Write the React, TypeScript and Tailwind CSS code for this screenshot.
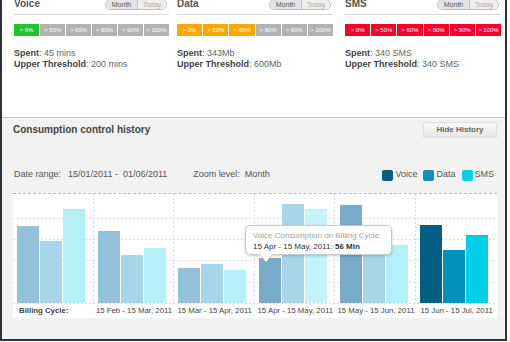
import React from 'react';

const font = { fontFamily: '"Liberation Sans", Arial, Helvetica, sans-serif' };

const steps = ['> 0%', '> 50%', '> 60%', '> 80%', '> 90%', '> 100%'];

const meters = [
  { title: 'Voice', on: 'bg-[#1fc42f]', active: 1, spent: '45 mins', upper: '200 mins', w: 'w-[155px]', ml: '' },
  { title: 'Data', on: 'bg-[#ffa600]', active: 3, spent: '343Mb', upper: '600Mb', w: 'w-[156px]', ml: 'ml-[8px]' },
  { title: 'SMS', on: 'bg-[#f8002c]', active: 6, spent: '340 SMS', upper: '340 SMS', w: 'w-[156px]', ml: 'ml-[12px]' },
];

type Bar = { h: number; c: string };
const groups: { label: string; bars: Bar[] }[] = [
  { label: 'Billing Cycle:', bars: [{ h: 77, c: 'bg-[#93c1dd]' }, { h: 62, c: 'bg-[#a9d5eb]' }, { h: 94, c: 'bg-[#b4f0f8]' }] },
  { label: '15 Feb - 15 Mar, 2011', bars: [{ h: 72, c: 'bg-[#93c1dd]' }, { h: 48, c: 'bg-[#a9d5eb]' }, { h: 55, c: 'bg-[#b4f0f8]' }] },
  { label: '15 Mar - 15 Apr, 2011', bars: [{ h: 35, c: 'bg-[#93c1dd]' }, { h: 39, c: 'bg-[#a9d5eb]' }, { h: 33, c: 'bg-[#b4f0f8]' }] },
  { label: '15 Apr - 15 May, 2011', bars: [{ h: 45, c: 'bg-[#78aacb]' }, { h: 99, c: 'bg-[#a9d5eb]' }, { h: 94, c: 'bg-[#c3f2f8]' }] },
  { label: '15 May - 15 Jun, 2011', bars: [{ h: 98, c: 'bg-[#78aacb]' }, { h: 62, c: 'bg-[#a9d5eb]' }, { h: 58, c: 'bg-[#b4f0f8]' }] },
  { label: '15 Jun - 15 Jul, 2011', bars: [{ h: 78, c: 'bg-[#005d84]' }, { h: 53, c: 'bg-[#0092bb]' }, { h: 68, c: 'bg-[#00cde6]' }] },
];

function Meter({ m }: { m: (typeof meters)[number] }) {
  return (
    <div className={`${m.w} ${m.ml} flex flex-col`}>
      <div className="flex items-center justify-between h-[10px] -mt-[1px]">
        <span className="text-[10px] leading-[10px] font-bold text-[#555]">{m.title}</span>
        <div className="mr-[2px] flex h-[11px] w-[62px] overflow-hidden rounded-full border border-[#bdbdbd] text-[7px] leading-[9px]">
          <span className="flex w-[32px] items-center justify-center bg-[#e4e4e4] text-[#555] border-r border-[#c4c4c4]">Month</span>
          <span className="flex flex-1 items-center justify-center bg-[#efefef] text-[#aaa]">Today</span>
        </div>
      </div>
      <div className="mt-[5px] h-px bg-[#dadada]" />
      <div className="mt-[9px] flex h-[12px] gap-px">
        {steps.map((s, i) => (
          <div
            key={s}
            className={`flex flex-1 items-center justify-center text-[6px] text-white ${i < m.active ? m.on : 'bg-[#b3b3b3]'}`}
          >
            {s}
          </div>
        ))}
      </div>
      <div className="mt-[12px] text-[9px] leading-[11px] text-[#666]">
        <div>
          <span className="font-bold text-[#444]">Spent</span>: {m.spent}
        </div>
        <div>
          <span className="font-bold text-[#444]">Upper Threshold</span>: {m.upper}
        </div>
      </div>
    </div>
  );
}

function Gridlines() {
  return (
    <svg className="absolute left-0 top-0" width="483" height="110">
      {[24, 45, 66, 88, 109].map((y) => (
        <line key={y} x1="0" x2="483" y1={y + 0.5} y2={y + 0.5} stroke="#dcdcdc" strokeDasharray="2 2" />
      ))}
      {[80, 160, 241, 321, 402].map((x) => (
        <line key={x} x1={x + 0.5} x2={x + 0.5} y1="0" y2="109" stroke="#dcdcdc" strokeDasharray="2 2" />
      ))}
    </svg>
  );
}

export default function App() {
  return (
    <div className="w-[510px] h-[342px] bg-white overflow-hidden" style={font}>
      <div className="w-[507px] h-[341px] flex flex-col border-l-2 border-r-2 border-b-2 border-[#2d3236]">
        <div className="h-[118px] shrink-0 bg-white border-b border-[#cbcbcb] flex pl-[12px]">
          {meters.map((m) => (
            <Meter key={m.title} m={m} />
          ))}
        </div>

        <div className="flex-1 bg-[#f2f2f2] pl-[11px] pr-[8px]">
          <div className="flex items-center justify-between pt-[4px] h-[19px]">
            <span className="text-[10px] font-bold text-[#444]">Consumption control history</span>
            <button className="h-[15px] w-[74px] rounded-[2px] border border-[#dedede] bg-gradient-to-b from-[#fafafa] to-[#e9e9e9] text-[8px] font-bold text-[#666] shadow-[0_1px_1px_rgba(0,0,0,0.08)]">
              Hide History
            </button>
          </div>

          <div className="mt-[32px] flex h-[12px] items-center text-[9px] text-[#555]">
            <span className="ml-[1px]">Date range:</span>
            <span className="ml-[7px]">15/01/2011 -&nbsp; 01/06/2011</span>
            <span className="ml-[26px]">Zoom level:&nbsp; Month</span>
            <div className="ml-auto mr-[3px] flex items-center">
              <span className="h-[11px] w-[11px] rounded-[2px] bg-[#0b5c80]" />
              <span className="ml-[2px]">Voice</span>
              <span className="ml-[6px] h-[11px] w-[11px] rounded-[2px] bg-[#0e90b8]" />
              <span className="ml-[2px]">Data</span>
              <span className="ml-[7px] h-[11px] w-[11px] rounded-[2px] bg-[#12cde8]" />
              <span className="ml-[1px]">SMS</span>
            </div>
          </div>

          <div className="relative mt-[12px] h-[125px] bg-white border-t border-dashed border-[#bcbcbc]">
            <Gridlines />
            <div className="relative grid grid-cols-6">
              {groups.map((g, gi) => (
                <div key={g.label} className="flex flex-col">
                  <div className="flex h-[109px] items-end gap-px pl-[4px]">
                    {g.bars.map((b, i) => (
                      <div key={i} className={`w-[22px] ${b.c}`} style={{ height: b.h }} />
                    ))}
                  </div>
                  <div
                    className={`h-[15px] flex items-center text-[7.8px] text-[#444] whitespace-nowrap ${gi === 0 ? 'pl-[6px] font-bold' : 'justify-center'}`}
                  >
                    {g.label}
                  </div>
                </div>
              ))}
            </div>

            <div className="absolute left-[232px] top-[31px] w-[147px] h-[30px] rounded-[5px] border border-[#c9c9c9] bg-white pl-[7px] pt-[4px] text-[8px] leading-[11px] whitespace-nowrap shadow-[0_1px_3px_rgba(0,0,0,0.2)]">
              <div className="text-[#a3a3a3]">Voice Consumption on Billing Cycle:</div>
              <div className="text-[#333]">
                15 Apr - 15 May, 2011: <span className="font-bold">56 Min</span>
              </div>
              <svg className="absolute left-[14px] top-[28px]" width="12" height="9">
                <path d="M0 0.5 L6 8 L12 0.5" fill="white" stroke="#c9c9c9" />
                <rect x="0.5" y="0" width="11" height="1.5" fill="white" />
              </svg>
            </div>
          </div>
        </div>
      </div>
    </div>
  );
}
